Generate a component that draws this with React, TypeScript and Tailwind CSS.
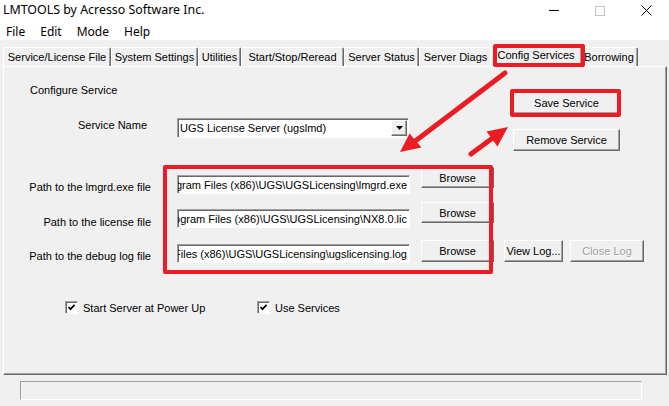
import React from "react";

const RAISED =
  "bg-[#f0f0f0] border border-t-white border-l-white border-r-[#696969] border-b-[#696969] shadow-[inset_-1px_-1px_0_#a0a0a0]";
const SUNKEN =
  "bg-white border border-t-[#a0a0a0] border-l-[#a0a0a0] border-r-white border-b-white shadow-[inset_1px_1px_0_#696969]";

type BtnProps = { children: React.ReactNode; className?: string; disabled?: boolean };

function Btn({ children, className = "", disabled = false }: BtnProps) {
  return (
    <div
      className={`${RAISED} flex shrink-0 items-center justify-center whitespace-nowrap leading-[14px] ${
        disabled ? "text-[#a0a0a0] [text-shadow:1px_1px_0_#fff]" : "text-black"
      } ${className}`}
    >
      {children}
    </div>
  );
}

function Field({ value, className = "" }: { value: string; className?: string }) {
  return (
    <div
      className={`${SUNKEN} flex shrink-0 items-center justify-end overflow-hidden whitespace-nowrap pr-[2px] leading-[14px] ${className}`}
    >
      <span className="shrink-0">{value}</span>
    </div>
  );
}

function Check({ label, className = "" }: { label: string; className?: string }) {
  return (
    <div className={`flex items-center ${className}`}>
      <div className={`${SUNKEN} flex h-[13px] w-[13px] shrink-0 items-center justify-center`}>
        <svg width="9" height="9" viewBox="0 0 9 9">
          <path d="M1.5 4 L3.5 6.2 L7.6 1.8" stroke="#000" strokeWidth="1.7" fill="none" />
        </svg>
      </div>
      <span className="ml-[5px] leading-[14px]">{label}</span>
    </div>
  );
}

type TabDef = { label: string; w: string; selected?: boolean };

function Tab({ label, w, selected }: TabDef) {
  if (selected) {
    return (
      <div
        className={`relative z-10 -mx-[2px] -mb-px flex h-[23px] shrink-0 items-center justify-center whitespace-nowrap rounded-t-[2px] border-l border-t border-r border-l-white border-t-white border-r-[#696969] bg-[#f0f0f0] pb-[3px] leading-[14px] shadow-[inset_-1px_0_0_#a0a0a0] ${w}`}
      >
        {label}
      </div>
    );
  }
  return (
    <div
      className={`flex h-[19px] shrink-0 items-center justify-center whitespace-nowrap rounded-t-[2px] border-l border-t border-r border-l-white border-t-white border-r-[#696969] leading-[14px] shadow-[inset_-1px_0_0_#a0a0a0] ${w}`}
    >
      {label}
    </div>
  );
}

const TABS: TabDef[] = [
  { label: "Service/License File", w: "w-[108px]" },
  { label: "System Settings", w: "w-[87px]" },
  { label: "Utilities", w: "w-[43px]" },
  { label: "Start/Stop/Reread", w: "w-[103px]" },
  { label: "Server Status", w: "w-[75px]" },
  { label: "Server Diags", w: "w-[73px]" },
  { label: "Config Services", w: "w-[92px]", selected: true },
  { label: "Borrowing", w: "w-[58px]" },
];

export default function App() {
  return (
    <div className="relative h-[406px] w-[669px] overflow-hidden bg-[#f0f0f0] font-['Liberation_Sans',Arial,sans-serif] text-[11px] text-black">
      {/* Title bar */}
      <div className="flex h-[21px] items-center bg-white font-['Noto_Sans',sans-serif] text-[12.4px]">
        <span className="pl-[3px] leading-none">LMTOOLS by Acresso Software Inc.</span>
        <div className="ml-auto flex h-full">
          <div className="flex w-[46px] items-center justify-center">
            <div className="h-px w-[10px] bg-black" />
          </div>
          <div className="flex w-[46px] items-center justify-center">
            <div className="h-[10px] w-[10px] border border-[#c4c4c4]" />
          </div>
          <div className="flex w-[46px] items-center justify-center">
            <svg width="11" height="11" viewBox="0 0 11 11">
              <path d="M0.5 0.5 L10.5 10.5 M10.5 0.5 L0.5 10.5" stroke="#000" strokeWidth="1" />
            </svg>
          </div>
        </div>
      </div>

      {/* Menu bar */}
      <div className="flex h-[19px] items-start gap-[15px] bg-white pl-[6px] pt-[2px] font-['Noto_Sans',sans-serif] text-[12px] leading-[17px]">
        <span>File</span>
        <span>Edit</span>
        <span>Mode</span>
        <span>Help</span>
      </div>

      {/* Tabs */}
      <div className="relative z-10 mt-[4px] flex h-[22px] items-end pl-[3px]">
        {TABS.map((t) => (
          <Tab key={t.label} {...t} />
        ))}
      </div>

      {/* Tab panel */}
      <div className="ml-[3px] flex h-[309px] w-[664px] flex-col border border-b-[#696969] border-l-white border-r-[#696969] border-t-white shadow-[inset_-1px_-1px_0_#a0a0a0]">
        {/* Top section */}
        <div className="flex h-[100px] shrink-0">
          <div className="w-[505px] pt-[16px]">
            <div className="pl-[26px] leading-[15px]">Configure Service</div>
            <div className="mt-[20px] flex items-start">
              <div className="w-[143px] text-right leading-[14px]">Service Name</div>
              <div className={`${SUNKEN} ml-[30px] flex h-[20px] w-[232px] items-center pl-[2px] leading-[14px]`}>
                <span className="flex-1 whitespace-nowrap">UGS License Server (ugslmd)</span>
                <div className={`${RAISED} mr-px flex h-[16px] w-[16px] items-center justify-center`}>
                  <svg width="7" height="4" viewBox="0 0 7 4">
                    <path d="M0 0 H7 L3.5 4 Z" fill="#000" />
                  </svg>
                </div>
              </div>
            </div>
          </div>
          <div className="pl-[4px] pt-[25px]">
            <Btn className="h-[22px] w-[107px]">Save Service</Btn>
            <Btn className="mt-[15px] h-[22px] w-[107px]">Remove Service</Btn>
          </div>
        </div>

        {/* Path rows */}
        <div className="flex h-[35px] shrink-0 items-start">
          <div className="mt-[13px] w-[147px] whitespace-nowrap text-right leading-[14px]">Path to the lmgrd.exe file</div>
          <Field className="ml-[26px] mt-[8px] h-[19px] w-[233px]" value="C:\Program Files (x86)\UGS\UGSLicensing\lmgrd.exe" />
          <Btn className="ml-[11px] h-[21px] w-[73px]">Browse</Btn>
        </div>
        <div className="flex h-[38px] shrink-0 items-start">
          <div className="mt-[13px] w-[147px] whitespace-nowrap text-right leading-[14px]">Path to the license file</div>
          <Field className="ml-[26px] mt-[7px] h-[19px] w-[233px]" value="C:\Program Files (x86)\UGS\UGSLicensing\NX8.0.lic" />
          <Btn className="ml-[11px] h-[21px] w-[73px]">Browse</Btn>
        </div>
        <div className="flex h-[22px] shrink-0 items-start">
          <div className="mt-[9px] w-[147px] whitespace-nowrap text-right leading-[14px]">Path to the debug log file</div>
          <Field className="ml-[26px] mt-[4px] h-[19px] w-[233px]" value="C:\Program Files (x86)\UGS\UGSLicensing\ugslicensing.log" />
          <Btn className="ml-[11px] h-[22px] w-[73px]">Browse</Btn>
          <Btn className="ml-[10px] h-[22px] w-[59px]">View Log...</Btn>
          <Btn className="ml-[7px] h-[22px] w-[74px]" disabled>
            Close Log
          </Btn>
        </div>

        {/* Checkboxes */}
        <div className="mt-[39px] flex h-[13px] items-center pl-[61px]">
          <Check className="w-[192px]" label="Start Server at Power Up" />
          <Check label="Use Services" />
        </div>
      </div>

      {/* Status bar */}
      <div className="ml-[20px] mt-[6px] h-[19px] w-[622px] border border-b-white border-l-[#a0a0a0] border-r-white border-t-[#a0a0a0]" />

      {/* Annotation overlays */}
      <div className="pointer-events-none absolute left-[493px] top-[44px] z-20 h-[23px] w-[92px] rounded-[2px] border-[4px] border-[#ec1c24]" />
      <div className="pointer-events-none absolute left-[510px] top-[89px] z-20 h-[28px] w-[111px] rounded-[2px] border-[4px] border-[#ec1c24]" />
      <div className="pointer-events-none absolute left-[163px] top-[165px] z-20 h-[109px] w-[330px] rounded-[2px] border-[4px] border-[#ec1c24]" />
      <svg className="pointer-events-none absolute left-0 top-0 z-20" width="669" height="406" viewBox="0 0 669 406">
        <line x1="505" y1="73" x2="414" y2="142" stroke="#ec1c24" strokeWidth="5" strokeLinecap="round" />
        <polygon points="400,152 409.5,133.5 421.5,147.5" fill="#ec1c24" />
        <line x1="471" y1="154" x2="494" y2="137" stroke="#ec1c24" strokeWidth="5" strokeLinecap="round" />
        <polygon points="508,127 486.5,131.5 497.5,146.5" fill="#ec1c24" />
      </svg>
    </div>
  );
}
